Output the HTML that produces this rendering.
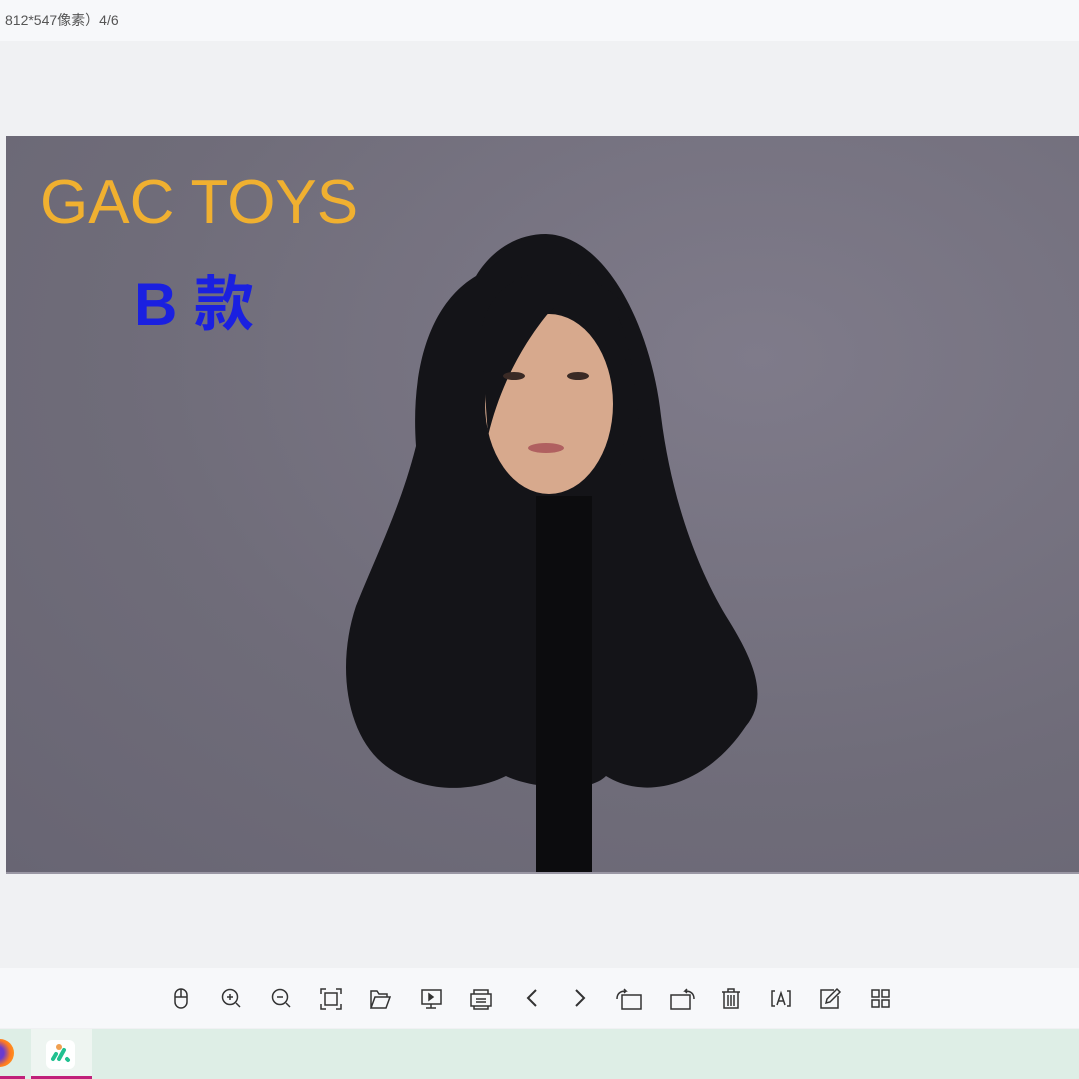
<!DOCTYPE html>
<html><head><meta charset="utf-8"><style>
body{margin:0;width:1079px;height:1079px;overflow:hidden;background:#f0f1f3;font-family:"Liberation Sans","Noto Sans CJK SC",sans-serif;position:relative}
.top{position:absolute;left:0;top:0;width:1079px;height:41px;background:#f7f8fa;font-size:14px;color:#555;line-height:41px;padding-left:5px;box-sizing:border-box}
.img{position:absolute;left:6px;top:136px;width:1073px;height:736px;background:radial-gradient(ellipse at 70% 30%,#7f7b8a,#6f6c79 60%,#686573);border-bottom:2px solid #9a97a4;overflow:hidden}
.tb{position:absolute;left:0;top:968px;width:1079px;height:60px;background:#f7f8fa}
.task{position:absolute;left:0;top:1029px;width:1079px;height:50px;background:#deeee6}
.ic{position:absolute;top:986px}
</style></head><body>
<div class="top">812*547像素）4/6</div>
<div class="img">
<div style="position:absolute;left:34px;top:31px;font-size:62px;color:#f0b030">GAC TOYS</div>
<div style="position:absolute;left:128px;top:120px;font-size:60px;color:#1a20e0;font-weight:bold">B 款</div>
<svg width="1073" height="736" style="position:absolute;left:0;top:0">
<path d="M470 140 C420 170 405 240 410 310 C395 370 370 420 350 470 C330 530 340 600 380 630 C420 660 470 655 500 640 C520 650 580 660 600 640 C640 665 700 650 740 590 C765 560 745 520 720 480 C690 430 665 360 655 280 C645 190 600 100 540 98 C510 98 485 115 470 140Z" fill="#141418"/>
<rect x="530" y="360" width="56" height="376" fill="#0c0c0e"/>
<ellipse cx="543" cy="268" rx="64" ry="90" fill="#d7a98d"/>
<path d="M475 200 C480 130 570 110 625 175 C600 160 560 155 540 180 C520 205 495 245 482 300Z" fill="#141418"/>
<path d="M612 180 C625 220 622 300 612 340 L640 340 C630 280 630 220 612 180Z" fill="#141418"/>
<ellipse cx="540" cy="312" rx="18" ry="5" fill="#b06060"/>
<ellipse cx="508" cy="240" rx="11" ry="4" fill="#3a2a25"/>
<ellipse cx="572" cy="240" rx="11" ry="4" fill="#3a2a25"/>
</svg>
</div>
<div class="tb"></div>
<svg class="ic" width="1079" height="28" viewBox="0 986 1079 28" style="left:0" fill="none" stroke="#333" stroke-width="1.5">
<rect x="175" y="989" width="12" height="19" rx="6"/><path d="M175 997h12M181 989v8"/>
<circle cx="230" cy="997" r="7.5"/><path d="M236 1003l4 4M227 997h6M230 994v6"/>
<circle cx="280" cy="997" r="7.5"/><path d="M286 1003l4 4M277 997h6"/>
<path d="M321 994v-5h5M336 989h5v5M341 1004v5h-5M326 1009h-5v-5"/><rect x="325" y="993" width="12" height="12"/>
<path d="M371 1008v-17h6l2 3h8v3M371 1008l4-11h15l-4 11z"/>
<rect x="422" y="990" width="19" height="14"/><path d="M431 1004v4M426 1008h10"/><path d="M429 994l4 3-4 3z" fill="#333"/>
<rect x="471" y="994" width="20" height="12"/><path d="M474 994v-4h14v4M476 999h10M476 1002h10M474 1006v3h14v-3"/>
<path d="M536 990l-8 8 8 8" stroke-width="2"/><path d="M576 990l8 8-8 8" stroke-width="2"/>
<rect x="622" y="995" width="19" height="14"/><path d="M617 999c0-6 4-8 9-8l-2-2M626 991l-2 2"/>
<rect x="671" y="995" width="19" height="14"/><path d="M694 999c0-6-4-8-9-8l2-2M685 991l2 2"/>
<path d="M722 992h18M728 992v-3h6v3M724 992v16h14v-16M728 995v11M731 995v11M734 995v11"/>
<path d="M775 991h-3v15h3M787 991h3v15h-3M777 1005l4-12 4 12M778 1001h6"/>
<path d="M834 990h-13v18h17v-12"/><path d="M826 1003l1-4 10-10 3 3-10 10z"/>
<rect x="872" y="990" width="7" height="7"/><rect x="882" y="990" width="7" height="7"/><rect x="872" y="1000" width="7" height="7"/><rect x="882" y="1000" width="7" height="7"/>
</svg>
<div class="task">
<div style="position:absolute;left:-14px;top:10px;width:28px;height:28px;border-radius:50%;background:radial-gradient(circle at 40% 50%,#6a3bd0 30%,#ff7a20 60%,#ffb020)"></div>
<div style="position:absolute;left:0;top:47px;width:25px;height:3px;background:#c0207a"></div>
<div style="position:absolute;left:31px;top:0;width:61px;height:50px;background:#eef5f1"></div>
<div style="position:absolute;left:31px;top:47px;width:61px;height:3px;background:#c0207a"></div>
<div style="position:absolute;left:46px;top:11px;width:29px;height:29px;border-radius:6px;background:#fff"></div>
<svg style="position:absolute;left:46px;top:11px" width="29" height="29"><circle cx="13" cy="7" r="3" fill="#f0a050"/><path d="M7 19l3-5M13 19l5-9M21 19l1 1" stroke="#20c090" stroke-width="4" stroke-linecap="round"/></svg>
</div>
</body></html>
